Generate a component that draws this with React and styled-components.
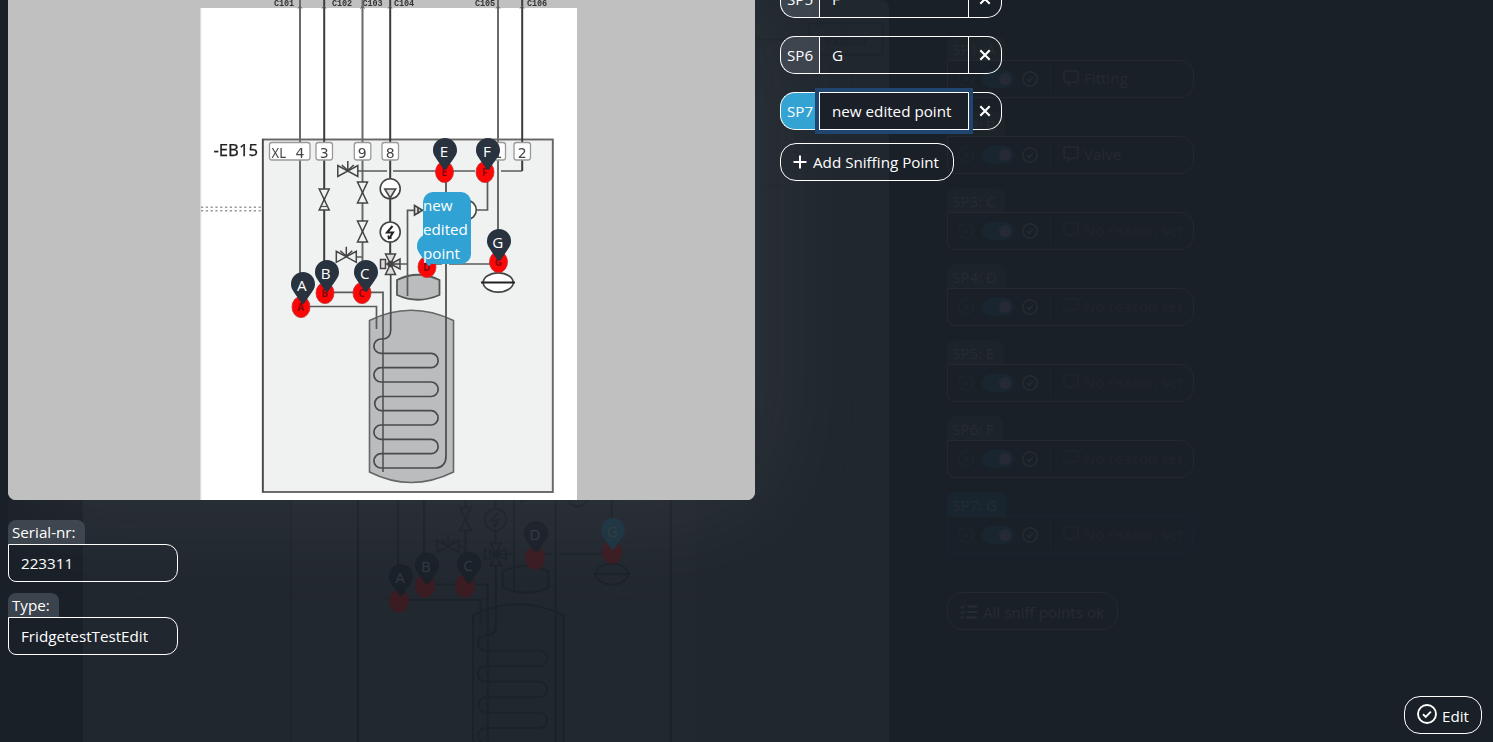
import React from "react";
import styled, { createGlobalStyle, css } from "styled-components";

const Global = createGlobalStyle`
  *, *::before, *::after { box-sizing: border-box; }
  body {
    margin: 0;
    overflow: hidden;
    background: #1a2027;
    color: #fff;
    font-family: "Open Sans", "Noto Sans", sans-serif;
    font-size: 15.2px;
    line-height: 24px;
  }
`;

const Screen = styled.div`
  position: relative;
  width: 1493px;
  height: 742px;
  overflow: hidden;
`;

/* Dimmed page behind the editor */
const Backdrop = styled.div`
  position: absolute;
  inset: 0;
  display: flex;
  gap: 58px;
  padding-left: 83px;
  overflow: hidden;
`;

const DimFigure = styled.div`
  position: relative;
  flex: none;
  width: 806px;
  height: 760px;
  padding-top: 269px;
  background: #20272e;
  border-radius: 0 8px 0 0;
`;

const DimDrawing = styled.div`
  height: 540px;
  svg { display: block; }
  [fill="#c0c0c0"] { fill: #20272e; }
  [fill="#fff"], [fill="#f0f2f1"], [fill="#ddd"] { fill: #22282f; }
  [fill="#bbbcbe"] { fill: #20272e; }
  [fill="#444"], [fill="#555"] { fill: #1b2229; }
  [stroke] { stroke: #1b2229; }
`;

const DimOverlay = styled.svg`
  position: absolute;
  left: 0;
  top: 0;
`;

const DimList = styled.div`
  display: flex;
  flex-direction: column;
  align-items: flex-start;
  gap: 14px;
  padding-top: 36px;
  width: 247px;
  color: #262c33;
`;

const DimTab = styled.div`
  width: fit-content;
  height: 24px;
  padding: 1px 9px 0 5px;
  border-radius: 8px 8px 0 0;
  background: ${(p) => (p.$active ? "#18252f" : "#1c2329")};
`;

const DimRow = styled.div`
  display: flex;
  align-items: center;
  width: 247px;
  height: 38px;
  padding-left: 10px;
  border: 1px solid ${(p) => (p.$active ? "#1a2530" : "#23292f")};
  border-radius: 0 14px 14px 8px;
`;

const DimToggle = styled.div`
  display: flex;
  justify-content: flex-end;
  align-items: center;
  width: 32px;
  height: 18px;
  margin: 0 8px;
  padding: 3px;
  border-radius: 9px;
  background: #192630;
  &::after {
    content: "";
    width: 12px;
    height: 12px;
    border-radius: 50%;
    background: #262a34;
  }
`;

const DimReason = styled.div`
  display: flex;
  align-items: center;
  gap: 5px;
  height: 30px;
  margin-left: 12px;
  padding-left: 12px;
  padding-bottom: 2px;
  border-left: 1px solid #1e242b;
  color: ${(p) => (p.$set ? "#242a31" : "#1f252c")};
  white-space: nowrap;
`;

const DimButton = styled.div`
  display: flex;
  align-items: center;
  gap: 6px;
  width: 171px;
  height: 38px;
  margin-top: 24px;
  padding: 1px 12px 0;
  border: 1px solid #23292f;
  border-radius: 16px;
  white-space: nowrap;
`;

/* Editor */
const Editor = styled.main`
  position: relative;
  display: flex;
  gap: 25px;
  height: 742px;
  margin-left: 8px;
  overflow: hidden;
`;

const LeftColumn = styled.section`
  width: 747px;
  flex: none;
`;

const Figure = styled.div`
  position: relative;
  height: 500px;
  background: #c0c0c0;
  border-radius: 0 0 8px 8px;
  box-shadow: 0 0 125px rgba(255, 245, 250, 0.08);
`;

const FigureClip = styled.div`
  height: 500px;
  overflow: hidden;
  border-radius: 0 0 8px 8px;
  svg { display: block; }
`;

const Pin = styled.div`
  position: absolute;
  left: ${(p) => p.$x - 8}px;
  top: ${(p) => p.$y}px;
  width: 24px;
  height: 32px;
  color: ${(p) => (p.$active ? "#30a2d3" : "#29323f")};
  svg { position: absolute; inset: 0; }
`;

const PinLetter = styled.span`
  position: absolute;
  inset: 1px 2px auto 0;
  text-align: center;
  color: #fff;
`;

const PinLabel = styled.span`
  position: absolute;
  left: 6px;
  top: -42px;
  width: 48px;
  height: 72px;
  padding-top: 1px;
  border-radius: 10px;
  background: #30a2d3;
  color: #fff;
`;

const Fields = styled.div`
  display: flex;
  flex-direction: column;
  gap: 11px;
  padding-top: 20px;
`;

const FieldLabel = styled.div`
  width: ${(p) => p.$w}px;
  height: 24px;
  padding-left: 4px;
  border-radius: 8px 8px 0 0;
  background: #3b434c;
`;

const FieldInput = styled.div`
  width: 170px;
  height: 38px;
  padding: 6px 12px 0;
  border: 1px solid #fff;
  border-radius: 0 12px 12px 8px;
`;

const RightColumn = styled.section`
  display: flex;
  flex-direction: column;
  align-items: flex-start;
  margin-top: -20px;
`;

const PointRow = styled.div`
  display: flex;
  height: 38px;
  margin-bottom: ${(p) => (p.$last ? 13 : 18)}px;
`;

const PointPrefix = styled.div`
  width: 39px;
  padding: 6px 0 0 6px;
  border: 1px solid #fff;
  border-right: 0;
  border-radius: 15px 0 0 15px;
  background: ${(p) => (p.$active ? "#30a2d3" : "#3b434c")};
`;

const PointInput = styled.div`
  width: 150px;
  padding: 6px 12px 0;
  border: 1px solid #fff;
  white-space: nowrap;
  ${(p) =>
    p.$active &&
    css`
      position: relative;
      background: #1b2028;
      box-shadow: 0 0 0 4px #20456f;
    `}
`;

const RemoveButton = styled.button`
  display: flex;
  align-items: center;
  justify-content: center;
  width: 33px;
  padding: 0;
  border: 1px solid #fff;
  border-left: 0;
  border-radius: 0 15px 15px 0;
  background: none;
  color: #fff;
`;

const OutlineButton = styled.button`
  display: flex;
  align-items: center;
  height: 38px;
  width: ${(p) => p.$w}px;
  gap: ${(p) => p.$gap || 6}px;
  padding: ${(p) => p.$drop || 0}px 0 0 12px;
  border: 1px solid #fff;
  border-radius: 16px;
  background: none;
  color: #fff;
  font: inherit;
  white-space: nowrap;
`;

const Footer = styled.div`
  position: absolute;
  right: 11px;
  bottom: 8px;
`;

const CheckSvg = styled.svg`
  flex: none;
  margin-bottom: ${(p) => p.$lift || 0}px;
`;

const CheckIcon = ({ size = 16, lift }) => (
  <CheckSvg $lift={lift} width={size} height={size} viewBox="0 0 16 16" fill="none" stroke="currentColor" strokeWidth="1.5">
    <circle cx="8" cy="8" r="7.2" />
    <path d="M4.8 8.2l2.2 2.1 4.1-4.2" />
  </CheckSvg>
);

const CrossCircle = () => (
  <svg width="16" height="16" viewBox="0 0 16 16" fill="none" stroke="#1e252c" strokeWidth="1.5">
    <circle cx="8" cy="8" r="7.2" />
    <path d="M5.7 5.7l4.6 4.6M10.3 5.7l-4.6 4.6" />
  </svg>
);

const Comment = () => (
  <svg width="16" height="16" viewBox="0 0 16 16" fill="none" stroke="currentColor" strokeWidth="1.5">
    <path d="M2 .9h12a1 1 0 0 1 1 1v9a1 1 0 0 1-1 1H9L5.6 14.8V11.900H2a1 1 0 0 1-1-1v-9a1 1 0 0 1 1-1z" />
  </svg>
);

const PIN_PATH =
  "M172.268 501.67C26.97 291.031 0 269.413 0 192 0 85.961 85.961 0 192 0s192 85.961 192 192c0 77.413-26.97 99.031-172.268 309.67-9.535 13.774-29.93 13.773-39.464 0z";

const RED_DOTS = [
  [301, 307, "A"],
  [325, 293, "B"],
  [362, 293, "C"],
  [427, 267, "D"],
  [444.5, 172, "E"],
  [485, 172, "F"],
  [498.5, 262, "G"],
];

const Box = ({ x, w, label, tx }) => (
  <g>
    <rect x={x} y="142.500" width={w} height="17.500" rx="2.500" fill="#fff" stroke="#999" strokeWidth="1.300" />
    {label && (
      <text x={tx} y="157.500" fontSize="14" fill="#444" textAnchor="middle" fontFamily="DejaVu Sans">
        {label}
      </text>
    )}
  </g>
);

const Hourglass = ({ x, y }) => (
  <path d={`M${x - 5} ${y}h10l-10 21h10z`} fill="#f0f2f1" stroke="#444" strokeWidth="1.500" />
);

const SideValve = ({ x, y }) => (
  <g fill="#f0f2f1" stroke="#444" strokeWidth="1.500">
    <path d={`M${x - 10} ${y - 5.500}v11l20-11v11z`} />
    <path d={`M${x} ${y}v-10M${x - 6} ${y - 6}l6 5.500 6-5.500`} fill="none" />
  </g>
);

const coil = () => {
  const ys = [339, 353.3, 367.7, 382, 396.5, 410.7, 425, 439.3, 453.7, 468];
  let d = "M390.700 275V330Q390.700 339 382 339H381";
  for (let i = 0; i < ys.length - 1; i++) {
    d += i % 2 === 0
      ? `A7.100 7.150 0 0 0 381 ${ys[i + 1]}H${i === ys.length - 2 ? 436 : 431}`
      : `A7.100 7.150 0 0 1 431 ${ys[i + 1]}H381`;
  }
  return d + "Q446 467 446 456V180";
};

const PIPE_LABELS = [
  ["C101", 274],
  ["C102", 332],
  ["C103", 362.5],
  ["C104", 394],
  ["C105", 475],
  ["C106", 527],
];

const Drawing = ({ width, height, main }) => (
  <svg width={width} height={height} viewBox="8 0 747 500" preserveAspectRatio="none">
    {main && (
      <defs>
        <filter id="soft" x="0" y="0" width="1" height="1" colorInterpolationFilters="sRGB">
          <feGaussianBlur stdDeviation="0.6" />
        </filter>
      </defs>
    )}
    <rect x="8" y="0" width="747" height="500" fill="#c0c0c0" />
    <g filter={main ? "url(#soft)" : undefined}>
      <rect x="200.500" y="8" width="376.500" height="500" fill="#fff" />
      <path d="M200.800 8V500" stroke="#ddd" />
      {main && (
        <g fontFamily="Liberation Mono" fontSize="8.500" fontWeight="700" fill="#333">
          {PIPE_LABELS.map(([t, x]) => (
            <text key={t} x={x} y="5.500" textLength="20">{t}</text>
          ))}
        </g>
      )}
      <path d="M201 207.300H262M201 210.700H262" stroke="#999" strokeWidth="1.500" strokeDasharray="2.200 2.600" />
      <rect x="262.800" y="139.500" width="290" height="352.500" fill="#f0f2f1" stroke="#666" strokeWidth="1.900" />
      <path d="M262.800 139V492" stroke="#444" strokeWidth="1.300" />
      {main && (
        <text x="213.500" y="156.300" fontSize="17" fill="#222" stroke="#222" strokeWidth=".25" textLength="44.500" lengthAdjust="spacingAndGlyphs" fontFamily="Noto Sans">
          -EB15
        </text>
      )}
      <path d="M369.500 320.500Q411 300 453.500 320.500V472Q411 493 369.500 472Z" fill="#bbbcbe" stroke="#666" strokeWidth="1.600" />
      <path d="M397 280Q418 269.500 439.500 280V295Q418 304.500 397 295Z" fill="#bbbcbe" stroke="#555" strokeWidth="1.800" />
      <g fill="none" stroke="#5a5a5a" strokeWidth="1.700">
        <path d="M300 0V300M362.500 0V290M498 0V256" stroke="#6a6a6a" strokeWidth="2" />
        <path d="M324.200 0V290M390.200 0V266M522.200 0V171" stroke="#3c3c3c" strokeWidth="2" />
        <path d="M522.200 171H501M358 171H387M393 171H475M485 171H487.500V210H476M310 306.500H376.500V329M333 292.300H383V472M401 264H407.500M435 264H442M449 264H490M357 257H362" />
        <path d="M414 210.300H407.500V296" />
        <path d={coil()} stroke="#4a4a4a" />
        <path d="M298 8.500l2-2.500 2 2.500M322 8.500l2-2.500 2 2.500M360.500 8.500l2-2.500 2 2.500M388 8.500l2-2.500 2 2.500M496 8.500l2-2.500 2 2.500M520 8.500l2-2.500 2 2.500" strokeWidth="1" />
      </g>
      <Box x={269.500} w={40.500} />
      {main && (
        <g fill="#444">
          <text x="271.500" y="157.500" fontSize="14" fontFamily="Noto Sans" textLength="14.500" lengthAdjust="spacingAndGlyphs">XL</text>
          <text x="300" y="157.500" fontSize="14" fontFamily="DejaVu Sans" textAnchor="middle">4</text>
        </g>
      )}
      <Box x={316} w={16.500} label={main && "3"} tx={324.300} />
      <Box x={354.300} w={16.500} label={main && "9"} tx={362.300} />
      <Box x={382} w={16.500} label={main && "8"} tx={390.300} />
      <Box x={489} w={16.500} label={main && "1"} tx={498} />
      <Box x={514} w={16.500} label={main && "2"} tx={522.300} />
      <SideValve x={347.800} y={171} />
      <SideValve x={346.300} y={256.800} />
      <Hourglass x={324.200} y={189} />
      <path d="M320.500 206.500h7.500" stroke="#555" strokeWidth="1.200" />
      <Hourglass x={362.500} y={182} />
      <Hourglass x={362.500} y={221} />
      <g fill="#fff" stroke="#444" strokeWidth="1.600">
        <circle cx="390.200" cy="188.800" r="10" />
        <path d="M384.800 189h10.800l-5.400 9z" fill="#ddd" />
        <circle cx="390.200" cy="232" r="10" />
        <path d="M392.500 226l-5.500 6.500h6l-3.500 5.500" fill="none" stroke="#222" strokeWidth="2" />
        <path d="M388.200 235.500l.5 3 3-.8" fill="none" stroke="#222" />
        <circle cx="466.500" cy="210" r="9.800" />
        <path d="M414.500 205.500v9.500l8-4.800zM418 207v7" fill="#ddd" />
      </g>
      <g fill="#ddd" stroke="#444" strokeWidth="1.500">
        <path d="M385.500 254h10l-5 10zM385.500 274.500h10l-5-10.500zM380.500 259.500h5v9h-5zM400 259v10l-9.500-5z" />
        <path d="M385.500 264h15" />
        <circle cx="390.500" cy="264" r="2.500" fill="#444" />
      </g>
      <ellipse cx="498.200" cy="282.500" rx="15" ry="9.600" fill="#fff" stroke="#444" strokeWidth="1.600" />
      <path d="M481 282.500H515" stroke="#222" strokeWidth="2.200" />
      {main &&
        RED_DOTS.map(([x, y, l]) => (
          <g key={l}>
            <ellipse cx={x} cy={y} rx="9" ry="10.600" fill="#fc0606" stroke="#b33" strokeWidth=".8" />
            <text x={x} y={y + 4} fontSize="10" fontWeight="700" textAnchor="middle" fill="#7a0a10">{l}</text>
          </g>
        ))}
    </g>
  </svg>
);

const PINS = [
  { l: "A", x: 290.7, y: 271.700 },
  { l: "B", x: 314.7, y: 260.400 },
  { l: "C", x: 353.7, y: 259.600 },
  { l: "E", x: 433, y: 137.700 },
  { l: "F", x: 476, y: 137.700 },
  { l: "G", x: 486.7, y: 228.600 },
];

const DIM_PINS = [
  { l: "A", x: 389, y: 564.300, rx: 399, ry: 601 },
  { l: "B", x: 415, y: 552.700, rx: 425, ry: 586 },
  { l: "C", x: 457, y: 551.700, rx: 465, ry: 586 },
  { l: "D", x: 524, y: 521, rx: 535, ry: 558 },
  { l: "G", x: 601, y: 518, rx: 612, ry: 552, active: true },
];

const DIM_POINTS = [
  ["SP1: A", "Fitting"],
  ["SP2: B", "Valve"],
  ["SP3: C"],
  ["SP4: D"],
  ["SP5: E"],
  ["SP6: F"],
  ["SP7: G"],
];

const PinShape = () => (
  <svg width="24" height="32" viewBox="0 0 384 512">
    <path d={PIN_PATH} fill="currentColor" />
  </svg>
);

const Point = ({ name, value, active, last }) => (
  <PointRow $last={last}>
    <PointPrefix $active={active}>{name}</PointPrefix>
    <PointInput $active={active}>{value}</PointInput>
    <RemoveButton aria-label="Remove">
      <svg width="12" height="12" viewBox="0 0 12 12" fill="none" stroke="currentColor" strokeWidth="2.100">
        <path d="M1.300 1.300l9.400 9.400M10.700 1.300L1.300 10.700" />
      </svg>
    </RemoveButton>
  </PointRow>
);

export default function App() {
  return (
    <Screen>
      <Global />
      <Backdrop>
        <DimFigure>
          <DimDrawing>
            <Drawing width={806} height={540} />
          </DimDrawing>
          <DimOverlay width="806" height="742" viewBox="83 0 806 742">
            <g fill="none" stroke="#1c2329" strokeWidth="1.600">
              <rect x="809.500" y="23.500" width="73" height="31" />
              <path d="M755 39.500H809" />
            </g>
            <text x="825" y="45" fontSize="13" fill="#1c2329" fontFamily="Liberation Serif" textLength="42">Exhaust</text>
            <text x="760" y="190" fontSize="9" fill="#1c2329" fontFamily="Liberation Serif" textLength="21">C107</text>
            {DIM_PINS.map((p) => (
              <g key={p.l}>
                <ellipse cx={p.rx} cy={p.ry} rx="10" ry="11.500" fill="#3b1c22" />
                <path d={PIN_PATH} transform={`translate(${p.x} ${p.y}) scale(.0625)`} fill={p.active ? "#1b3340" : "#192028"} />
                <text x={p.x + 11} y={p.y + 19} fontSize="15.200" textAnchor="middle" fill="#323840">{p.l}</text>
              </g>
            ))}
          </DimOverlay>
        </DimFigure>
        <DimList>
          {DIM_POINTS.map(([name, reason], i) => (
            <div key={name}>
              <DimTab $active={i === 6}>{name}</DimTab>
              <DimRow $active={i === 6}>
                <CrossCircle />
                <DimToggle />
                <CheckIcon />
                <DimReason $set={!!reason}>
                  <Comment />
                  {reason || "No reason set"}
                </DimReason>
              </DimRow>
            </div>
          ))}
          <DimButton>
            <svg width="17" height="16" viewBox="0 0 17 16" fill="none" stroke="currentColor" strokeWidth="2">
              <path d="M7.500 2.500H17M7.500 8H17M6 13.500H17" />
              <path d="M.5 2.500l1.500 1.500L5 .8M.5 8l1.500 1.500L5 6.300" strokeWidth="1.500" />
              <circle cx="2" cy="13.500" r=".7" />
            </svg>
            All sniff points ok
          </DimButton>
        </DimList>
      </Backdrop>

      <Editor>
        <LeftColumn>
          <Figure>
            <FigureClip>
              <Drawing width={747} height={500} main />
            </FigureClip>
            {PINS.map((p) => (
              <Pin key={p.l} $x={p.x} $y={p.y}>
                <PinShape />
                <PinLetter>{p.l}</PinLetter>
              </Pin>
            ))}
            <Pin $x={417} $y={234} $active>
              <PinShape />
              <PinLabel>new edited point</PinLabel>
            </Pin>
          </Figure>
          <Fields>
            <div>
              <FieldLabel $w={77}>Serial-nr:</FieldLabel>
              <FieldInput>223311</FieldInput>
            </div>
            <div>
              <FieldLabel $w={51}>Type:</FieldLabel>
              <FieldInput>FridgetestTestEdit</FieldInput>
            </div>
          </Fields>
        </LeftColumn>
        <RightColumn>
          <Point name="SP5" value="F" />
          <Point name="SP6" value="G" />
          <Point name="SP7" value="new edited point" active last />
          <OutlineButton $w={174}>
            <svg width="14" height="14" viewBox="0 0 14 14" stroke="currentColor" strokeWidth="2">
              <path d="M7 .5v13M.5 7h13" />
            </svg>
            Add Sniffing Point
          </OutlineButton>
        </RightColumn>
      </Editor>
      <Footer>
        <OutlineButton $w={78} $gap={5} $drop={1}>
          <CheckIcon size={20} lift={4} />
          Edit
        </OutlineButton>
      </Footer>
    </Screen>
  );
}
